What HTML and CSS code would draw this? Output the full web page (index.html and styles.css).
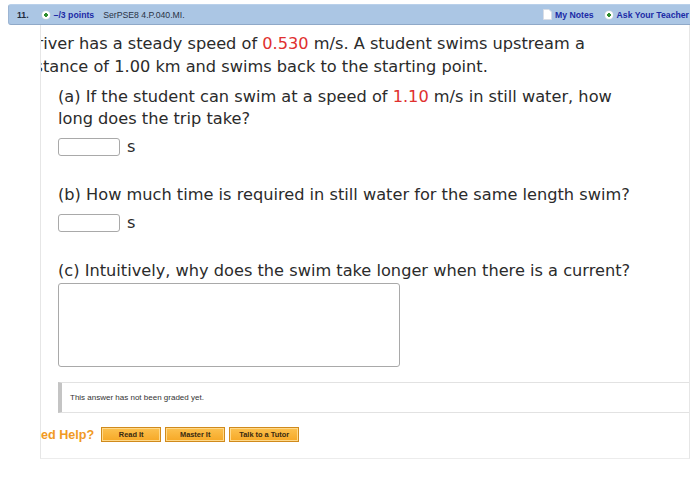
FILE: index.html
```html
<!DOCTYPE html>
<html>
<head>
<meta charset="utf-8">
<link rel="stylesheet" href="styles.css">
</head>
<body>
<div class="page">
  <div class="bar">
    <div class="bar-left">
      <span class="qnum">11.</span>
      <span class="dot"></span>
      <span class="points">&ndash;/3 points</span>
      <span class="code">SerPSE8 4.P.040.MI.</span>
    </div>
    <div class="bar-right">
      <svg class="doc" width="9" height="11" viewBox="0 0 9 11"><path d="M0.5 0.5 H6 L8.5 3 V10.5 H0.5 Z" fill="#ffffff" stroke="#d8dde6" stroke-width="1"/></svg>
      <span class="link">My Notes</span>
      <span class="dot"></span>
      <span class="link">Ask Your Teacher</span>
    </div>
  </div>
  <div class="content">
    <div class="intro">
      <div class="line l1">river has a steady speed of <span class="num">0.530</span> m/s. A student swims upstream a</div>
      <div class="line l2">stance of 1.00 km and swims back to the starting point.</div>
    </div>
    <div class="part">
      <p class="q">(a) If the student can swim at a speed of <span class="num">1.10</span> m/s in still water, how long does the trip take?</p>
      <div class="answer"><span class="box"></span><span class="unit">s</span></div>
    </div>
    <div class="part">
      <p class="q">(b) How much time is required in still water for the same length swim?</p>
      <div class="answer"><span class="box"></span><span class="unit">s</span></div>
    </div>
    <div class="part">
      <p class="q">(c) Intuitively, why does the swim take longer when there is a current?</p>
      <div class="textarea"></div>
    </div>
    <div class="graded">This answer has not been graded yet.</div>
    <div class="help">
      <span class="help-label">ed Help?</span>
      <span class="btn w60">Read It</span>
      <span class="btn w60">Master It</span>
      <span class="btn w70">Talk to a Tutor</span>
    </div>
  </div>
</div>
</body>
</html>
```
FILE: styles.css
```css
html, body {
  margin: 0;
  padding: 0;
  background: #ffffff;
}
.page {
  width: 700px;
  height: 499px;
  padding-top: 4px;
  box-sizing: border-box;
}
.bar {
  margin-left: 8px;
  width: 682px;
  height: 21px;
  box-sizing: border-box;
  background: #abc6e4;
  border-bottom: 1px solid #8fa9c8;
  border-left: 1px solid #9db5d3;
  border-top: 1px solid #b9d0ea;
  border-radius: 3px 0 0 3px;
  display: flex;
  align-items: center;
  justify-content: space-between;
  font-family: "Liberation Sans", Arial, sans-serif;
  font-size: 8.7px;
  font-weight: bold;
}
.bar-left, .bar-right {
  display: flex;
  align-items: center;
}
.qnum {
  color: #1e2a3c;
  margin-left: 8px;
  margin-right: 13px;
}
.dot {
  width: 8px;
  height: 8px;
  border-radius: 50%;
  background: radial-gradient(circle, #2f8f2f 0 1.6px, #ffffff 2px);
  box-shadow: 0 0 0 0.5px #cfd8d0;
  margin-right: 4px;
}
.points {
  color: #1b2aa6;
  margin-right: 9px;
}
.code {
  color: #2a3344;
  font-weight: normal;
}
.doc {
  margin-right: 3px;
}
.link {
  color: #1b2aa6;
}
.bar-right .link:first-of-type {
  margin-right: 11px;
}
.bar-right {
  padding-right: 1px;
}
.content {
  margin-left: 40px;
  width: 650px;
  height: 434px;
  box-sizing: border-box;
  border-left: 1px solid #e6e6e6;
  border-right: 1px solid #e6e6e6;
  border-bottom: 1px solid #ececec;
  font-family: "DejaVu Sans", Verdana, sans-serif;
  font-size: 16.2px;
  color: #2b2b2b;
}
.intro {
  overflow: hidden;
  padding-top: 7px;
}
.line {
  white-space: nowrap;
  line-height: 23px;
}
.l1 {
  margin-left: -4.5px;
}
.l2 {
  margin-left: -6.5px;
}
.num {
  color: #e0302f;
}
.part {
  margin-left: 17px;
}
.q {
  margin: 0;
  line-height: 22px;
  width: 590px;
}
.intro + .part .q {
  padding-top: 8px;
}
.answer {
  display: flex;
  align-items: center;
  margin-top: 8px;
  margin-bottom: 28px;
}
.box {
  width: 60px;
  height: 16px;
  border: 1px solid #a9a9a9;
  border-radius: 3px;
  background: #fff;
}
.unit {
  margin-left: 7px;
  line-height: 16px;
}
.textarea {
  width: 340px;
  height: 82px;
  border: 1px solid #a9a9a9;
  border-radius: 3px;
  margin-top: 1px;
}
.graded {
  margin-left: 17px;
  margin-top: 15px;
  height: 31px;
  box-sizing: border-box;
  border-top: 1px solid #e2e2e2;
  border-bottom: 1px solid #e2e2e2;
  border-left: 4px solid #c4c4c4;
  padding-left: 8px;
  display: flex;
  align-items: center;
  font-family: "Liberation Sans", Arial, sans-serif;
  font-size: 8px;
  color: #333;
}
.help {
  display: flex;
  align-items: center;
  margin-top: 14px;
}
.help-label {
  font-family: "Liberation Sans", Arial, sans-serif;
  font-weight: bold;
  font-size: 12.6px;
  color: #f19a24;
  margin-right: 7px;
}
.btn {
  height: 15px;
  box-sizing: border-box;
  background: linear-gradient(#fcc14f, #f6a826);
  border: 1px solid #d08a1c;
  box-shadow: inset 0 0 0 1px #ffd98a;
  display: flex;
  align-items: center;
  justify-content: center;
  font-family: "Liberation Sans", Arial, sans-serif;
  font-weight: bold;
  font-size: 7.4px;
  color: #3a2a10;
  margin-right: 4px;
}
.w60 { width: 60px; }
.w70 { width: 70px; }
```
